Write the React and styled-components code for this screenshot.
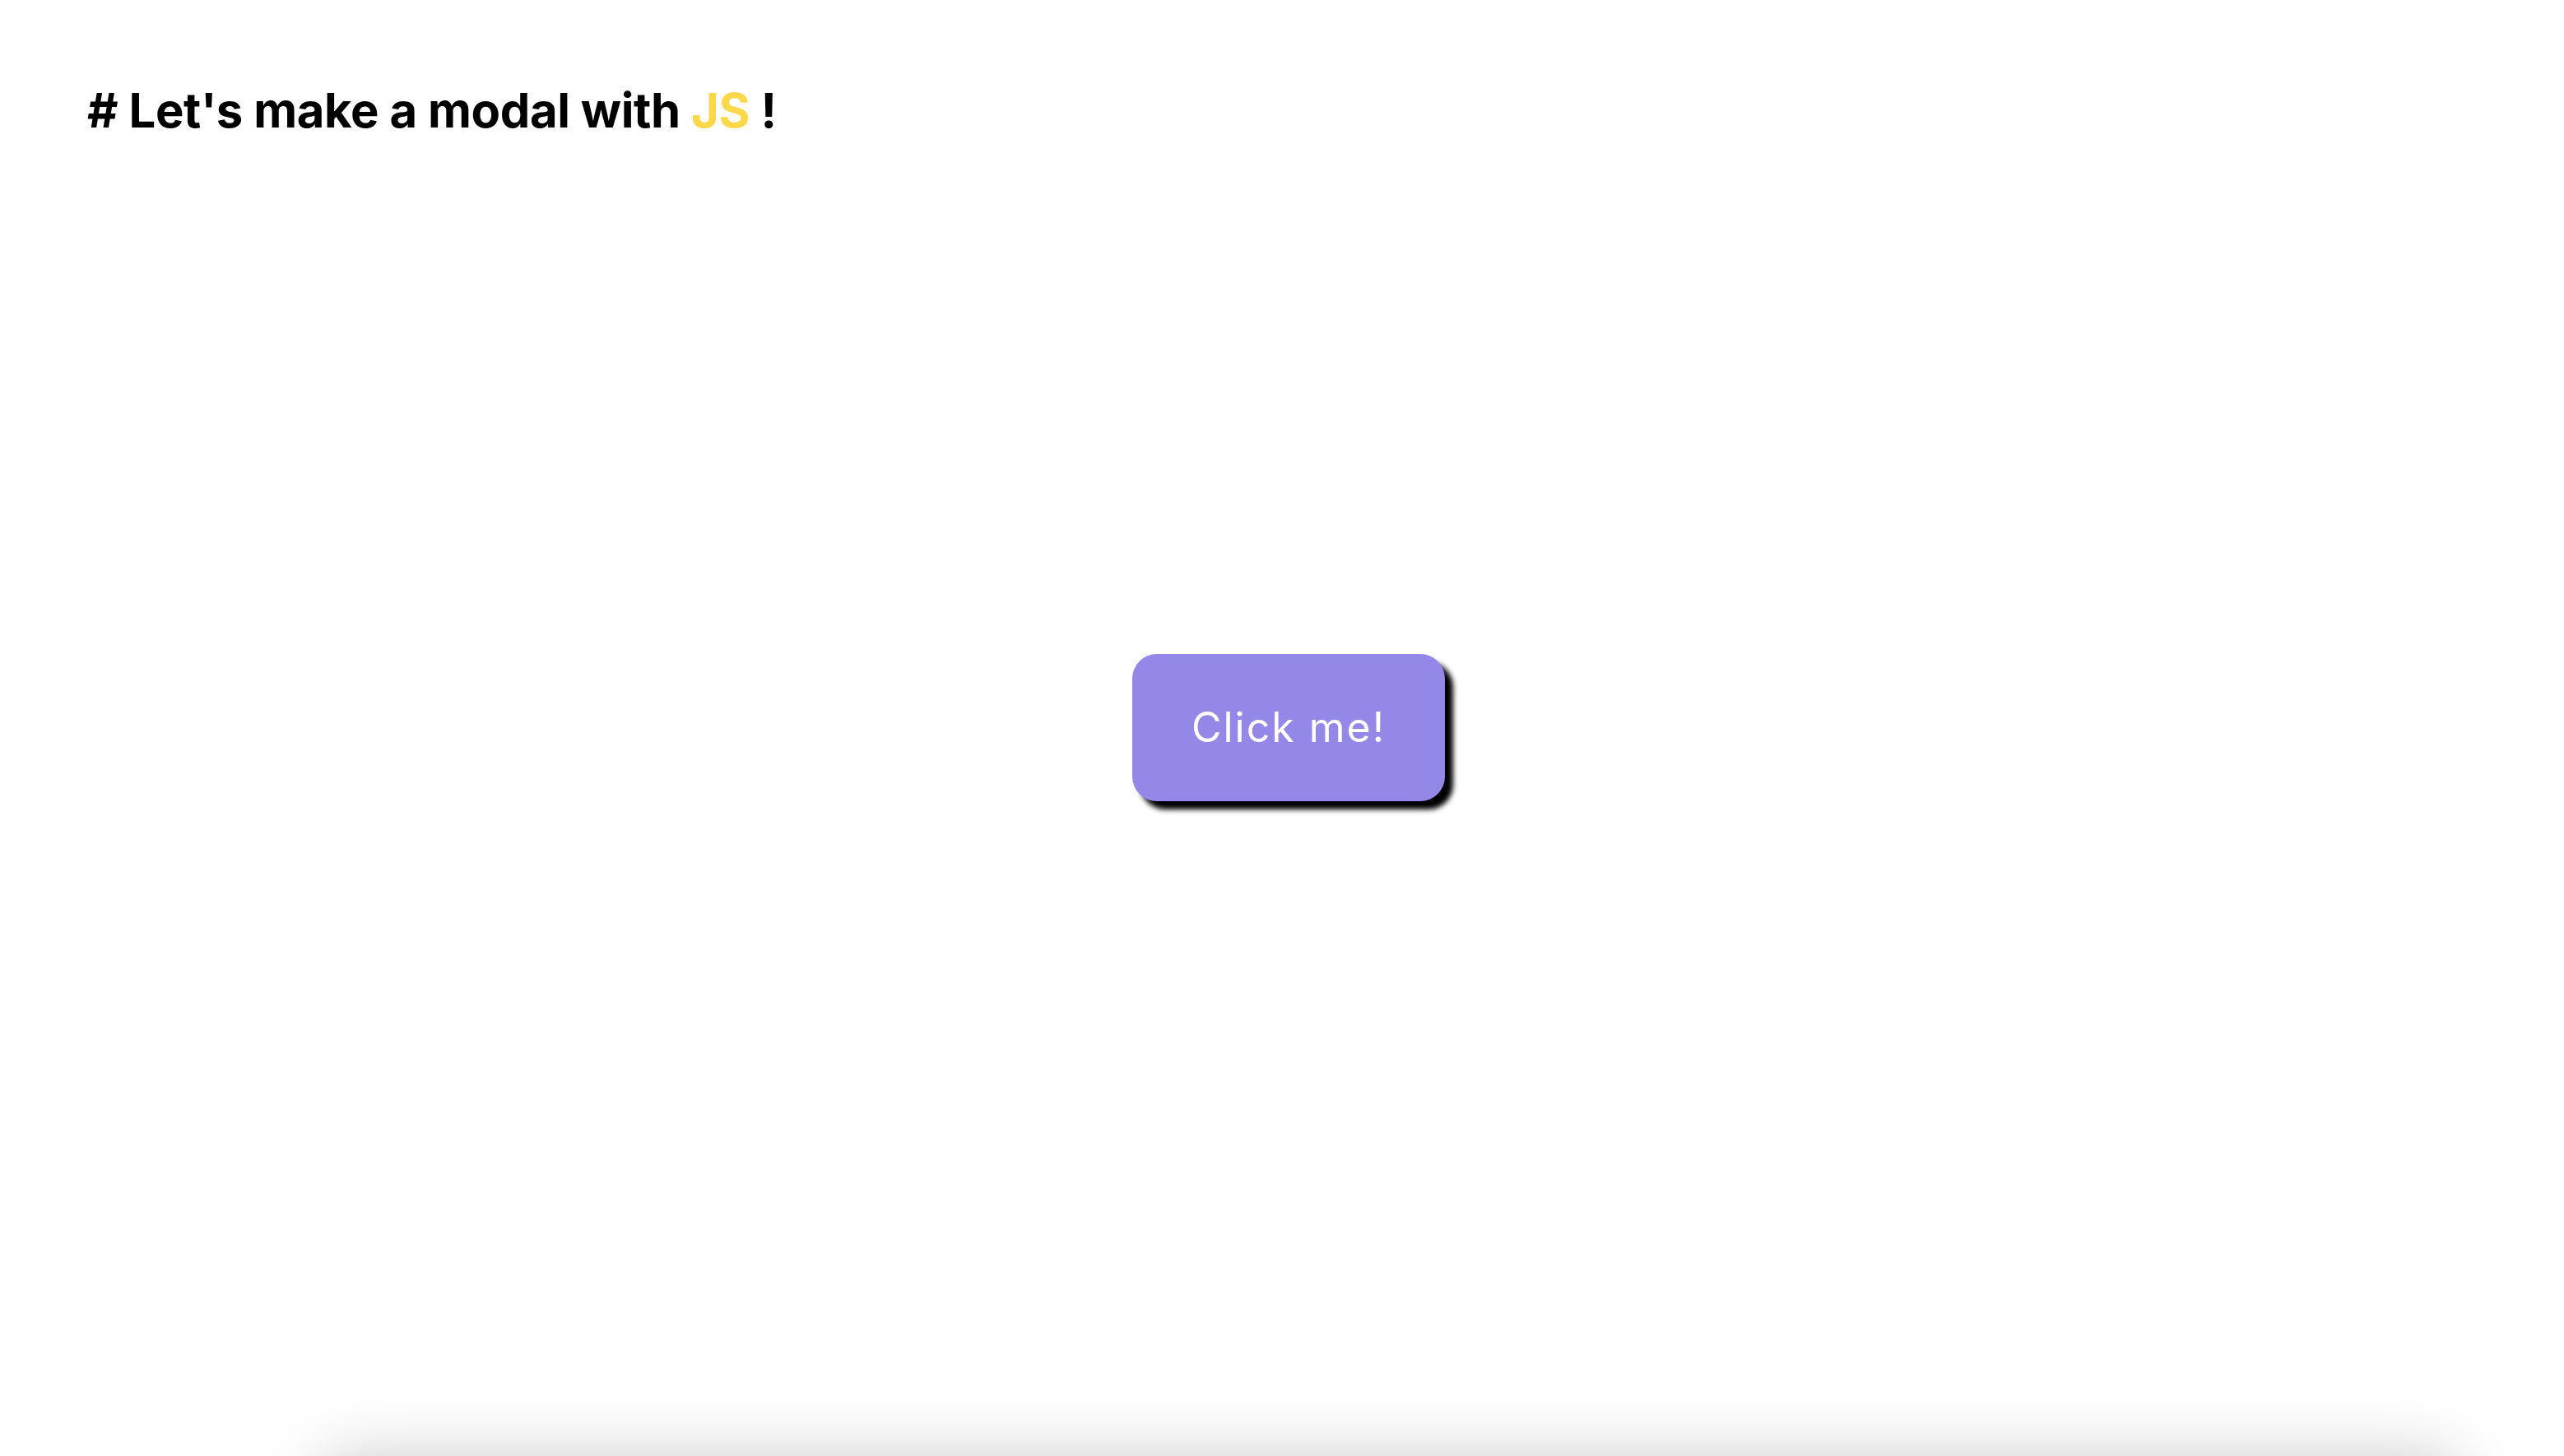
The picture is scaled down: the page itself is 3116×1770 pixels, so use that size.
import React from 'react'
import styled, { createGlobalStyle } from 'styled-components'

const GlobalStyle = createGlobalStyle`
  html, body {
    margin: 0;
    padding: 0;
    background: #ffffff;
    overflow: hidden;
  }
  body {
    font-family: Inter, "Noto Sans", sans-serif;
  }
`

const Page = styled.div`
  display: grid;
  height: 100vh;
  width: 100vw;
  position: relative;
  overflow: hidden;
`

const Header = styled.header`
  grid-area: 1 / 1;
  align-self: start;
  padding: 99px 0 0 106px;
`

const Title = styled.h1`
  margin: 0;
  font-family: Inter, "Noto Sans", sans-serif;
  font-weight: 700;
  font-size: 58px;
  line-height: normal;
  letter-spacing: -0.4px;
  color: #000;
`

const Accent = styled.span`
  color: #fbd84a;
`

const Main = styled.main`
  grid-area: 1 / 1;
  display: flex;
  align-items: center;
  justify-content: center;
  padding: 0 0 2px 16px;
`

const Button = styled.button`
  width: 380px;
  height: 179px;
  border: 0;
  border-radius: 30px;
  background: #9387e8;
  color: #fff;
  font-family: Inter, "Noto Sans", sans-serif;
  font-weight: 400;
  font-size: 50px;
  letter-spacing: 2px;
  box-shadow: 10px 10px 6px #000;
  cursor: pointer;
  display: flex;
  align-items: center;
  justify-content: center;
`

// modal waiting just below the viewport, only its shadow shows
const Modal = styled.div`
  position: absolute;
  top: 100%;
  left: 390px;
  width: 2600px;
  height: 900px;
  border-radius: 30px;
  background: #fff;
  box-shadow: 0 0 80px rgba(0, 0, 0, 0.2);
`

export default function App() {
  return (
    <>
      <GlobalStyle />
      <Page>
        <Header>
          <Title># Let's make a modal with <Accent>JS</Accent> !</Title>
        </Header>
        <Main>
          <Button>Click me!</Button>
        </Main>
        <Modal />
      </Page>
    </>
  )
}
